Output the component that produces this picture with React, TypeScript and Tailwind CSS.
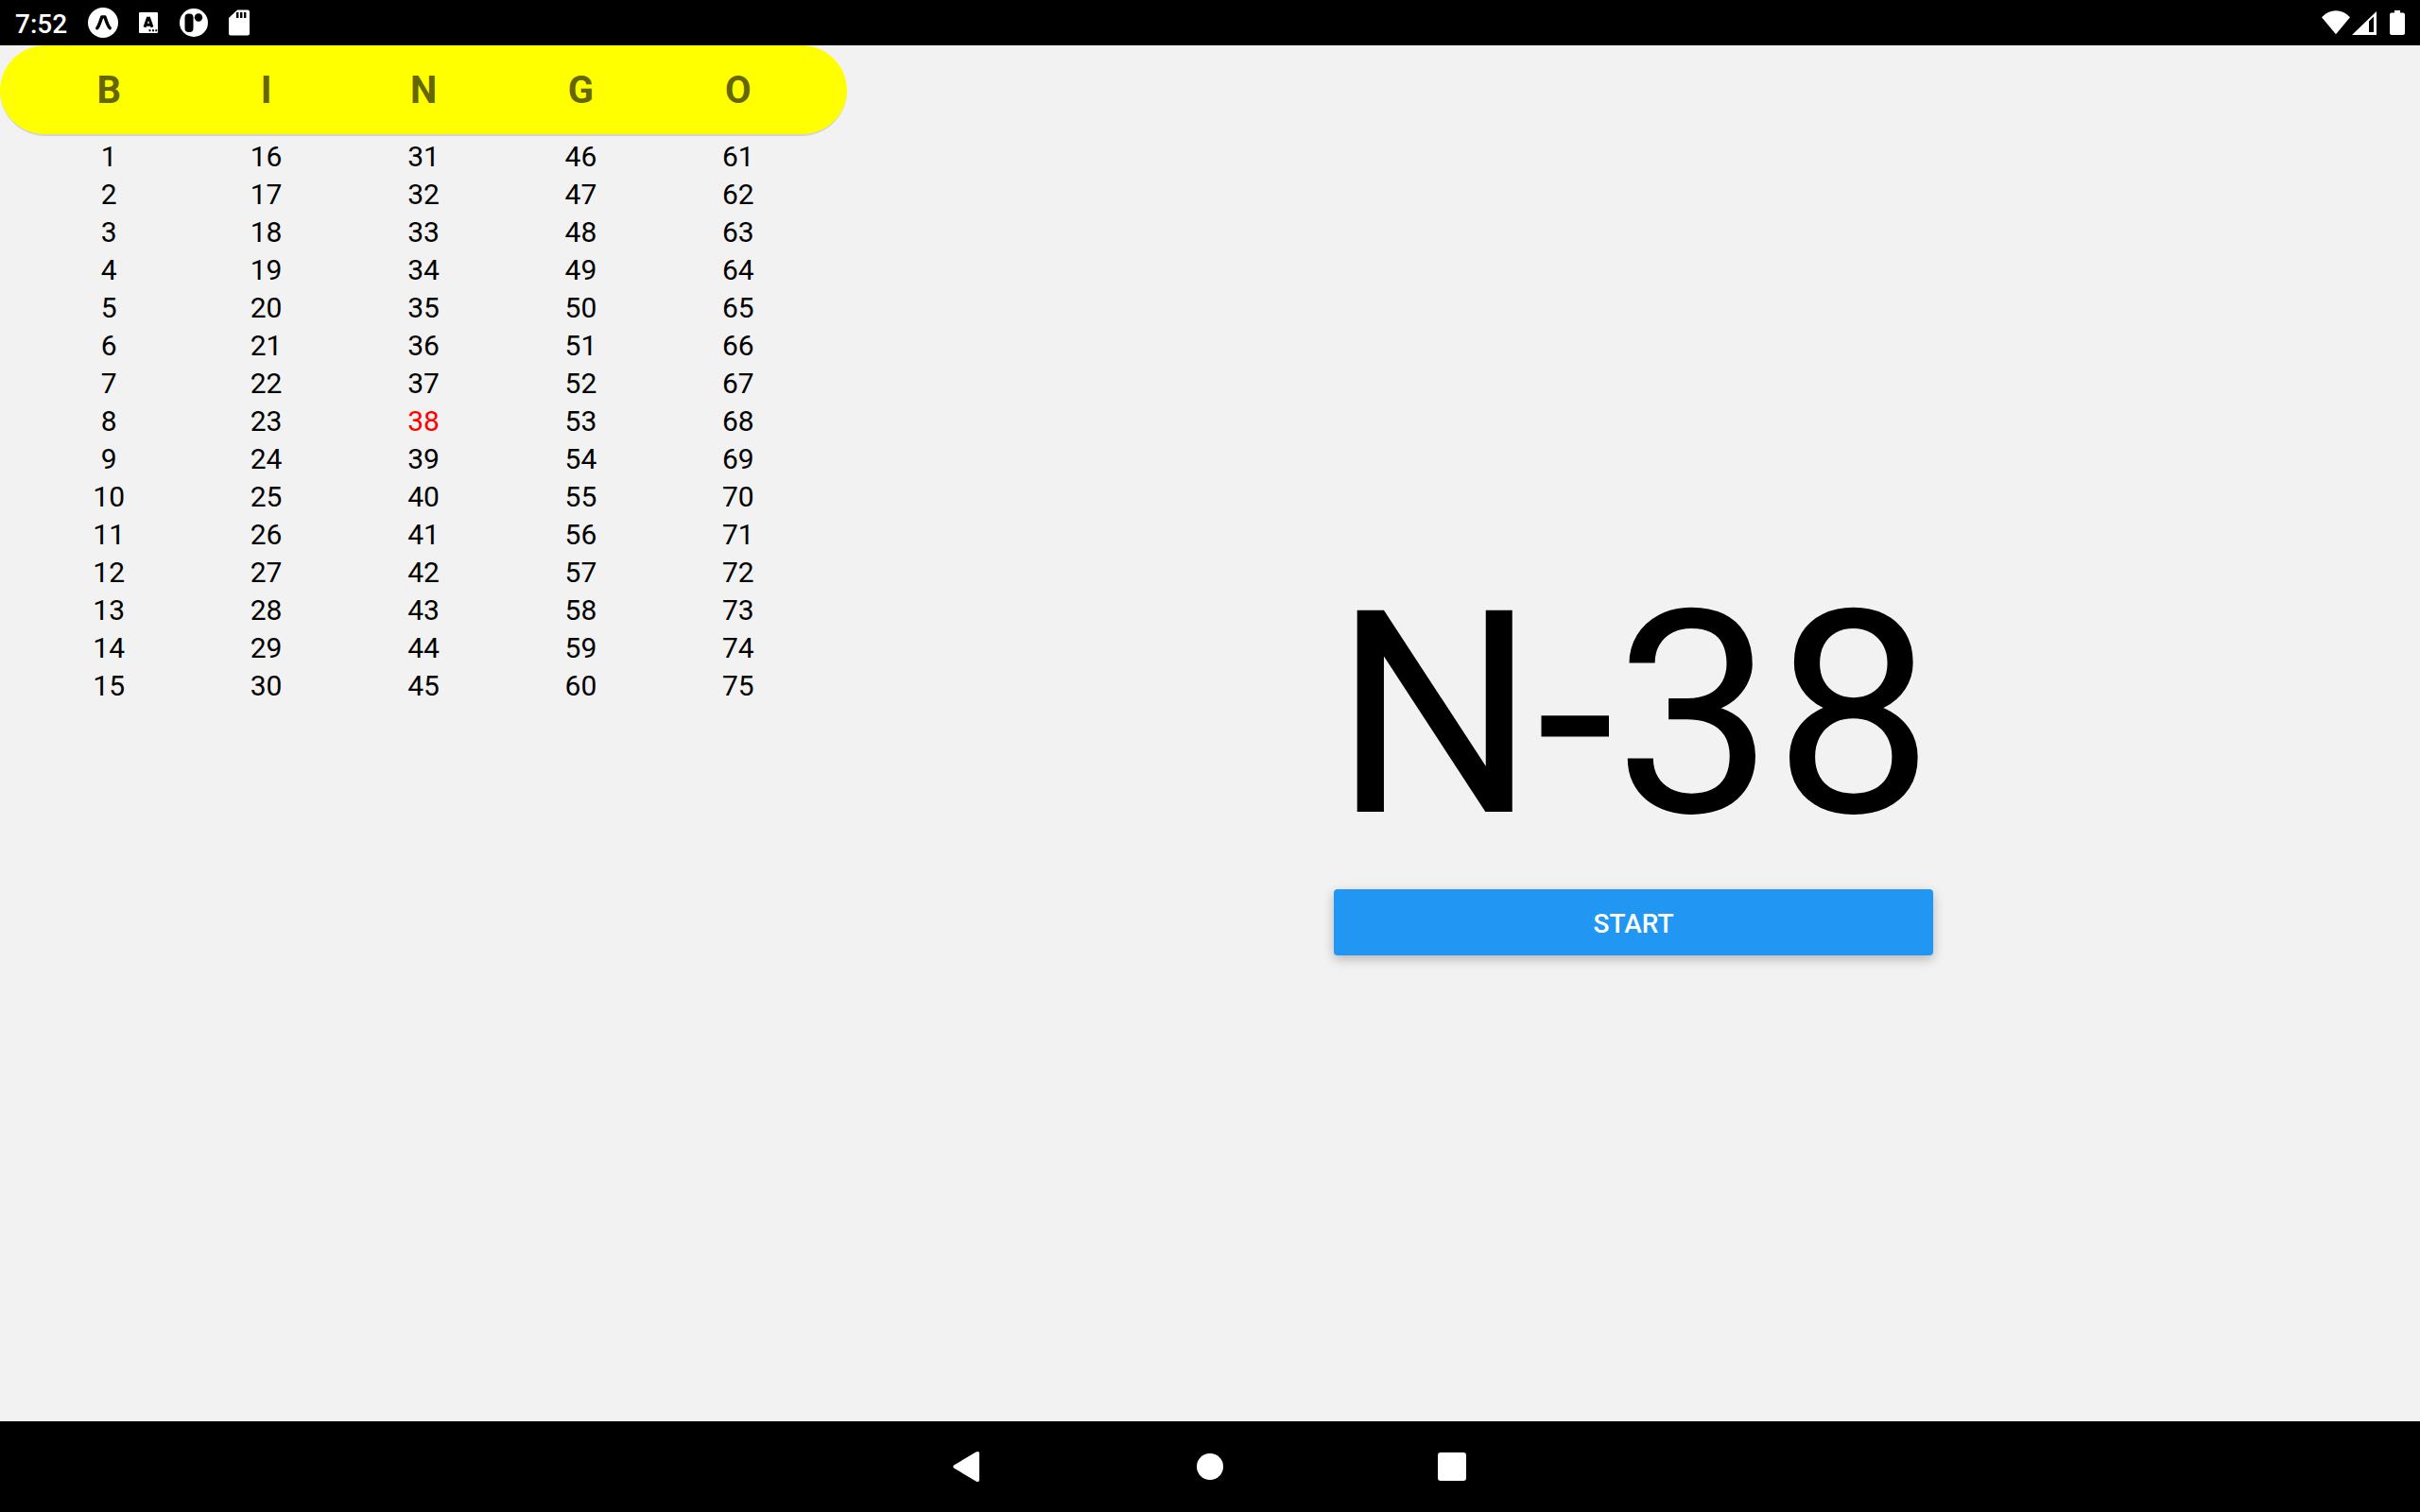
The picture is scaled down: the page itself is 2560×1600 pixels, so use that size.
const LETTERS = ['B', 'I', 'N', 'G', 'O'];
const ROWS = Array.from({ length: 15 }, (_, row) => LETTERS.map((_, col) => col * 15 + row + 1));
const CALLED = new Set([38]);

function StatusBar() {
  return (
    <header className="flex h-12 shrink-0 items-center justify-between bg-black pl-4 pr-2 text-white">
      <div className="flex items-center">
        <time className="w-[69px] pt-1 text-[28px] leading-8 font-medium">7:52</time>
        <svg className="size-12" viewBox="0 0 48 48" aria-label="Expo">
          <circle cx="24" cy="24" r="16" fill="#fff" />
          <path d="M17.800 29.800 C20 27 21.300 22 22.800 17.900 H26 C27.300 22 29 27 31.200 29.800" fill="none" stroke="#000" strokeWidth="3.400" strokeLinecap="round" strokeLinejoin="round" />
        </svg>
        <svg className="size-12" viewBox="0 0 48 48" aria-label="Keyboard">
          <rect x="14" y="13" width="20" height="22" rx="1" fill="#fff" />
          <path d="M20 28.800 L23.300 19.300 H24.700 L28 28.800 M21.300 26.200 H26.700" fill="none" stroke="#000" strokeWidth="3" />
          <path d="M24.500 31.300h2v2h-2z M28 31.300h2v2h-2z M31.300 31.300h2v2h-2z" fill="#000" />
        </svg>
        <svg className="size-12" viewBox="0 0 48 48" aria-label="App">
          <circle cx="24" cy="24" r="15" fill="#fff" />
          <rect x="14.500" y="14.500" width="9" height="19.500" rx="4" fill="#000" />
          <circle cx="29" cy="18.500" r="4.200" fill="#000" />
        </svg>
        <svg className="size-12" viewBox="0 0 48 48" aria-label="SD card">
          <path d="M22 10.500 H33 Q35 10.500 35 12.500 V35.500 Q35 37.500 33 37.500 H15 Q13 37.500 13 35.500 V19 Z" fill="#fff" />
          <path d="M21 13h2.400v6h-2.400z M25 13h2.400v6h-2.400z M29 13h2.400v6h-2.400z" fill="#000" />
        </svg>
      </div>
      <div className="flex items-center">
        <svg className="size-8" viewBox="0 0 32 32" aria-label="Wi-Fi">
          <path d="M15 28.300 L0 10.300 Q6.500 3.300 15 3.300 Q23.500 3.300 30 10.300 Z" fill="#fff" />
        </svg>
        <svg className="size-8" viewBox="0 0 32 32" aria-label="Mobile signal">
          <path fillRule="evenodd" d="M0 29 L26 4 V29 Z M18 14.500 V26 H23 V9.500 Z" fill="#fff" />
        </svg>
        <svg className="size-8" viewBox="0 0 32 32" aria-label="Battery">
          <path d="M13 3 H19 V5.500 H22 Q24 5.500 24 7.500 V27 Q24 29 22 29 H10 Q8 29 8 27 V7.500 Q8 5.500 10 5.500 H13 Z" fill="#fff" />
        </svg>
      </div>
    </header>
  );
}

function NumberTable() {
  return (
    <table className="block w-[35%] text-center">
      <thead className="block rounded-full border-b-2 border-[#d3d3d3] bg-[#ffff00] px-8 pt-0.5">
        <tr className="flex">
          {LETTERS.map((letter) => (
            <th key={letter} scope="col" className="flex-1 text-[40px] leading-[92px] font-bold text-[#666600]">
              {letter}
            </th>
          ))}
        </tr>
      </thead>
      <tbody className="block px-8 pt-0.5">
        {ROWS.map((row) => (
          <tr key={row[0]} className="flex">
            {row.map((n) => (
              <td key={n} className={CALLED.has(n) ? 'flex-1 text-[30px] leading-10 text-[#ff0000]' : 'flex-1 text-[30px] leading-10'}>
                {n}
              </td>
            ))}
          </tr>
        ))}
      </tbody>
    </table>
  );
}

function NavBar() {
  return (
    <nav className="flex h-24 shrink-0 justify-center bg-black">
      <button aria-label="Back" className="flex w-64 items-center justify-center">
        <svg className="size-12" viewBox="0 0 48 48">
          <path d="M9.500 22.200 L32.500 8.600 Q36 7 36 10 V38 Q36 41 32.500 39.400 L9.500 25.800 Q7 24 9.500 22.200 Z" fill="#fff" />
        </svg>
      </button>
      <button aria-label="Home" className="flex w-64 items-center justify-center">
        <span className="size-7 rounded-full bg-white" />
      </button>
      <button aria-label="Recent apps" className="flex w-64 items-center justify-center">
        <span className="size-[30px] rounded-[3px] bg-white" />
      </button>
    </nav>
  );
}

export default function App() {
  return (
    <div className="flex min-h-screen flex-col bg-[#f2f2f2] font-[Roboto,sans-serif] text-black">
      <StatusBar />
      <main className="flex flex-1">
        <NumberTable />
        <section className="flex flex-1 flex-col items-center justify-center">
          <div className="flex flex-col">
            <p className="pt-10 pb-2 text-center text-[300px] leading-[352px]">N-38</p>
            <button className="h-[70px] rounded-sm bg-[#2196f3] pt-1 text-[28px] leading-8 font-medium text-white shadow-[0_4px_12px_rgba(0,0,0,0.25)]">
              START
            </button>
          </div>
        </section>
      </main>
      <NavBar />
    </div>
  );
}
